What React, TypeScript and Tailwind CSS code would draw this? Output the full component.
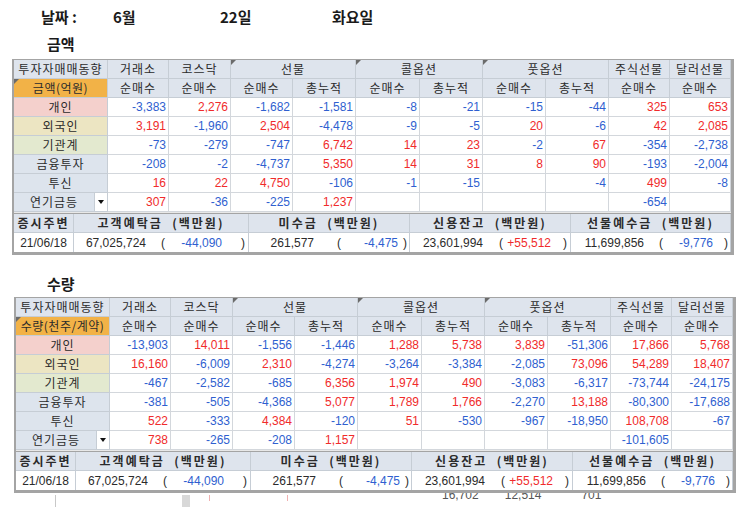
import React from "react";

const KR = "font-['Noto_Sans_CJK_KR','Noto_Sans',sans-serif]";
const NUM = "font-['Liberation_Sans','Noto_Sans_CJK_KR',sans-serif]";
const COLS =
  "grid grid-cols-[94px_61px_62px_62px_63px_64px_63px_63px_63px_61px_61px]";
const LINE = "border-[#c6cdd5]";
const HDR = "bg-[#dee4ed]";

type Row = { label: string; bg: string; vals: string[]; dropdown?: boolean };

const labelBg = {
  p: "bg-[#f4d0cc]",
  f: "bg-[#ece5c2]",
  i: "bg-[#e3e9cf]",
  b: "bg-[#dde4ed]",
};

const amountRows: Row[] = [
  { label: "개인", bg: labelBg.p, vals: ["-3,383", "2,276", "-1,682", "-1,581", "-8", "-21", "-15", "-44", "325", "653"] },
  { label: "외국인", bg: labelBg.f, vals: ["3,191", "-1,960", "2,504", "-4,478", "-9", "-5", "20", "-6", "42", "2,085"] },
  { label: "기관계", bg: labelBg.i, vals: ["-73", "-279", "-747", "6,742", "14", "23", "-2", "67", "-354", "-2,738"] },
  { label: "금융투자", bg: labelBg.b, vals: ["-208", "-2", "-4,737", "5,350", "14", "31", "8", "90", "-193", "-2,004"] },
  { label: "투신", bg: labelBg.b, vals: ["16", "22", "4,750", "-106", "-1", "-15", "", "-4", "499", "-8"] },
  { label: "연기금등", bg: labelBg.b, vals: ["307", "-36", "-225", "1,237", "", "", "", "", "-654", ""], dropdown: true },
];

const qtyRows: Row[] = [
  { label: "개인", bg: labelBg.p, vals: ["-13,903", "14,011", "-1,556", "-1,446", "1,288", "5,738", "3,839", "-51,306", "17,866", "5,768"] },
  { label: "외국인", bg: labelBg.f, vals: ["16,160", "-6,009", "2,310", "-4,274", "-3,264", "-3,384", "-2,085", "73,096", "54,289", "18,407"] },
  { label: "기관계", bg: labelBg.i, vals: ["-467", "-2,582", "-685", "6,356", "1,974", "490", "-3,083", "-6,317", "-73,744", "-24,175"] },
  { label: "금융투자", bg: labelBg.b, vals: ["-381", "-505", "-4,368", "5,077", "1,789", "1,766", "-2,270", "13,188", "-80,300", "-17,688"] },
  { label: "투신", bg: labelBg.b, vals: ["522", "-333", "4,384", "-120", "51", "-530", "-967", "-18,950", "108,708", "-67"] },
  { label: "연기금등", bg: labelBg.b, vals: ["738", "-265", "-208", "1,157", "", "", "", "", "-101,605", ""], dropdown: true },
];

function Tri() {
  return (
    <span className="absolute left-0 top-0 h-0 w-0 border-r-[5px] border-t-[5px] border-r-transparent border-t-[#6b6b6b]" />
  );
}

function numColor(v: string) {
  return v.startsWith("-") ? "text-[#2f5fd0]" : "text-[#f02b2b]";
}

function Head({ children, span, tri }: { children: React.ReactNode; span?: boolean; tri?: boolean }) {
  return (
    <div
      className={`relative flex h-[19px] items-center justify-center border-b border-r ${LINE} ${HDR} text-[12px] leading-none text-[#2b2b2b] ${span ? "col-span-2" : ""}`}
    >
      {tri && <Tri />}
      <span className="tracking-[1px]">{children}</span>
    </div>
  );
}

function Paren({ v, valW, gap1, sW, gap2, value }: { v: string; valW: string; gap1: string; sW: string; gap2: string; value: string }) {
  return (
    <div className={`flex h-[19px] items-center border-r ${LINE} bg-white text-[12px] leading-none ${NUM} text-[#2b2b2b]`}>
      <span className={`${valW} text-right`}>{value}</span>
      <span className={gap1}>(</span>
      <span className={`${sW} text-right ${v.startsWith("-") ? "text-[#2f5fd0]" : "text-[#f02b2b]"}`}>{v}</span>
      <span className={gap2}>)</span>
    </div>
  );
}

function BoldHead({ children }: { children: React.ReactNode }) {
  return (
    <div className={`flex h-[19px] items-center justify-center border-b border-r ${LINE} ${HDR} text-[12px] font-bold leading-none tracking-[2px] text-[#2b2b2b] whitespace-pre`}>
      {children}
    </div>
  );
}

function Table({ unit, rows, shift }: { unit: string; rows: Row[]; shift: string }) {
  return (
    <div className={`${shift} w-[722px] border-l-2 border-t border-b-[3px] border-r-[3px] border-[#a4a4a4] ${KR}`}>
      <div className={COLS}>
        <Head>투자자매매동향</Head>
        <Head>거래소</Head>
        <Head>코스닥</Head>
        <Head span tri>선물</Head>
        <Head span tri>콜옵션</Head>
        <Head span tri>풋옵션</Head>
        <Head>주식선물</Head>
        <Head>달러선물</Head>

        <div className={`relative flex h-[19px] items-center justify-center border-b border-r ${LINE} bg-[#f2b247] text-[12px] leading-none text-[#2b2b2b]`}>
          <Tri />
          <span className="tracking-[0.5px]">{unit}</span>
        </div>
        {["순매수", "순매수", "순매수", "총누적", "순매수", "총누적", "순매수", "총누적", "순매수", "순매수"].map((h, i) => (
          <Head key={i}>{h}</Head>
        ))}

        {rows.map((r) => (
          <React.Fragment key={r.label}>
            {r.dropdown ? (
              <div className={`flex h-[19px] items-center border-b border-r ${LINE} ${r.bg} text-[12px] leading-none text-[#2b2b2b]`}>
                <span className="flex-1 text-center tracking-[1px]">{r.label}</span>
                <span className={`flex h-full w-[13px] items-center justify-center border-l ${LINE} bg-white`}>
                  <span className="h-0 w-0 border-l-[3.5px] border-r-[3.5px] border-t-[4px] border-l-transparent border-r-transparent border-t-[#111]" />
                </span>
              </div>
            ) : (
              <div className={`flex h-[19px] items-center justify-center border-b border-r ${LINE} ${r.bg} text-[12px] leading-none text-[#2b2b2b] tracking-[1px]`}>
                {r.label}
              </div>
            )}
            {r.vals.map((v, i) => (
              <div
                key={i}
                className={`flex h-[19px] items-center justify-end border-b border-r border-[#d3d7dc] bg-white pr-[2px] text-[12px] leading-none ${NUM} ${numColor(v)}`}
              >
                {v}
              </div>
            ))}
          </React.Fragment>
        ))}
      </div>

      <div className="h-[2px] border-b border-[#a4a4a4] bg-[#e8e8e8]" />

      <div className="grid grid-cols-[60px_175px_161px_161px_160px]">
        <BoldHead>증시주변</BoldHead>
        <BoldHead>{"고객예탁금  (백만원)"}</BoldHead>
        <BoldHead>{"미수금  (백만원)"}</BoldHead>
        <BoldHead>{"신용잔고  (백만원)"}</BoldHead>
        <BoldHead>{"선물예수금  (백만원)"}</BoldHead>

        <div className={`flex h-[19px] items-center justify-center border-r ${LINE} bg-white text-[12px] leading-none ${NUM} text-[#2b2b2b]`}>
          21/06/18
        </div>
        <Paren value="67,025,724" v="-44,090" valW="w-[72px]" gap1="ml-[15px]" sW="w-[57px]" gap2="ml-[19px]" />
        <Paren value="261,577" v="-4,475" valW="w-[65px]" gap1="ml-[23px]" sW="w-[57px]" gap2="ml-[5px]" />
        <Paren value="23,601,994" v="+55,512" valW="w-[73px]" gap1="ml-[16px]" sW="w-[48px]" gap2="ml-[12px]" />
        <Paren value="11,699,856" v="-9,776" valW="w-[73px]" gap1="ml-[15px]" sW="w-[50px]" gap2="ml-[11px]" />
      </div>
    </div>
  );
}

export default function App() {
  return (
    <div className={`h-[507px] w-[743px] overflow-hidden bg-white ${KR}`}>
      <div className="flex h-[32px] items-center pl-[41px] text-[15px] font-bold leading-none text-[#1a1a1a]">
        <span className="w-[72px]">날짜 :</span>
        <span className="w-[107px]">6월</span>
        <span className="w-[112px]">22일</span>
        <span>화요일</span>
      </div>
      <div className="flex h-[22px] items-center pl-[47px] text-[15px] font-bold leading-none text-[#1a1a1a]">금액</div>
      <div className="h-[5px]" />
      <Table unit="금액(억원)" rows={amountRows} shift="ml-[12px]" />

      <div className="h-[17px]" />
      <div className="flex h-[22px] items-center pl-[47px] text-[15px] font-bold leading-none text-[#1a1a1a]">수량</div>
      <div className="h-[3px]" />
      <Table unit="수량(천주/계약)" rows={qtyRows} shift="ml-[14px]" />

      <div className="flex h-[16px] overflow-hidden">
        <div className="ml-[55px] mt-[2px] h-[14px] w-[1px] bg-[#c8c8c8]" />
        <div className="ml-[126px] mt-[2px] h-[14px] w-[8px] bg-[#d8d8d8]" />
        <div className="ml-[19px] mt-[2px] h-[6px] w-[1px] bg-[#f0b0b0]" />
        <div className="ml-[77px] mt-[2px] h-[6px] w-[1px] bg-[#f0b0b0]" />
        <div className={`ml-[154px] mt-[-4px] flex gap-[26px] text-[12px] leading-none text-[#555] ${NUM}`}>
          <span>16,702</span>
          <span>12,514</span>
          <span className="ml-[14px]">701</span>
        </div>
      </div>
    </div>
  );
}
